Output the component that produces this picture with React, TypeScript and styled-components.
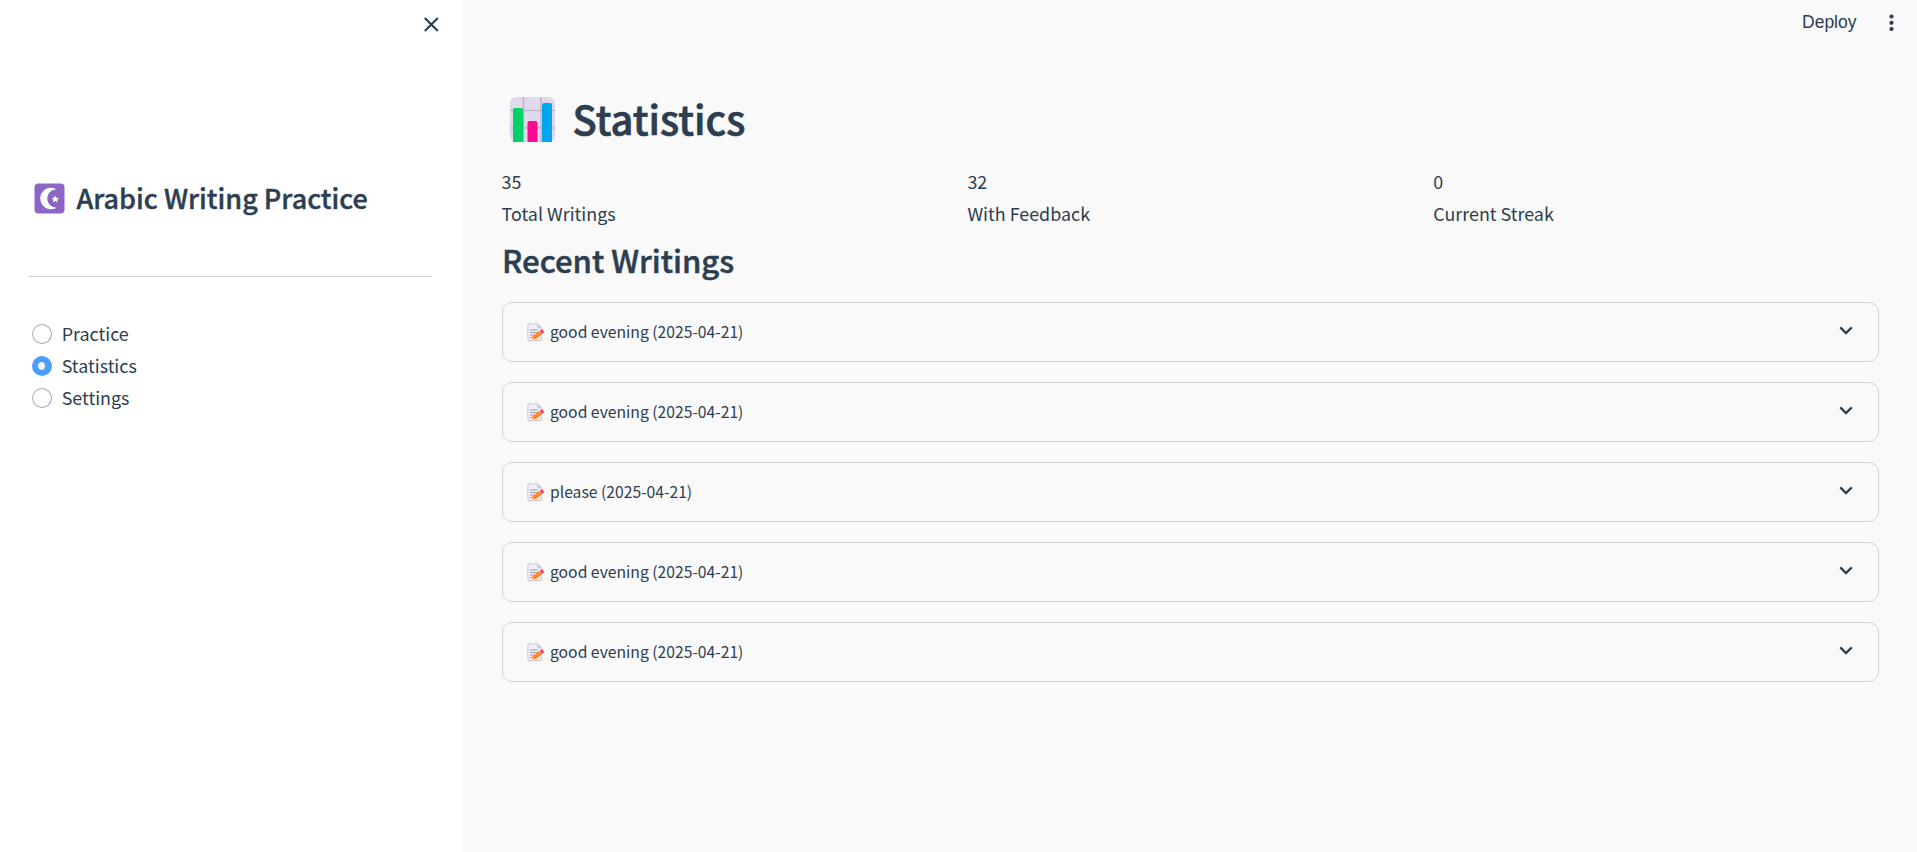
import React, { useState } from "react";
import styled, { createGlobalStyle } from "styled-components";

const ink = "#2c3e50";
const line = "#d0d2d6";

const GlobalStyle = createGlobalStyle`
  * { box-sizing: border-box; }
  body {
    margin: 0;
    background: #f9f9f9;
    color: ${ink};
    font-family: "Noto Sans CJK SC", "Noto Sans", sans-serif;
    font-size: 17.9px;
    line-height: 32px;
  }
  h1, h2, p { margin: 0; }
`;

const Page = styled.div`
  display: flex;
  height: 852px;
  overflow: hidden;
`;

const Sidebar = styled.aside`
  width: 462px;
  flex: none;
  background: #fff;
  padding: 14px 30px 0 29px;
  display: flex;
  flex-direction: column;
`;

const CloseButton = styled.button`
  align-self: flex-end;
  border: 0;
  padding: 0;
  margin-right: -9px;
  width: 20px;
  height: 20px;
  background: none;
  color: ${ink};
  svg { display: block; }
`;

const Brand = styled.h1`
  display: flex;
  align-items: center;
  gap: 11.5px;
  margin-top: 146px;
  padding-left: 5px;
  font-size: 27px;
  line-height: 36px;
  font-weight: 500;
  -webkit-text-stroke: 0.4px ${ink};
  white-space: nowrap;
`;

const Divider = styled.hr`
  width: 403px;
  margin: 60px 0 40px;
  border: 0;
  border-top: 1px solid ${line};
`;

const Option = styled.label`
  display: flex;
  align-items: center;
  gap: 9.7px;
  height: 32px;
  padding-left: 3px;
  cursor: pointer;
  input { display: none; }
`;

const Dot = styled.span<{ $on: boolean }>`
  display: flex;
  align-items: center;
  justify-content: center;
  width: 20px;
  height: 20px;
  margin-top: 2px;
  border-radius: 50%;
  background: ${(p) => (p.$on ? "#4a9eff" : "linear-gradient(to left, #9a9fac, #acb0ba)")};
  &::after {
    content: "";
    width: ${(p) => (p.$on ? "7px" : "18px")};
    height: ${(p) => (p.$on ? "8px" : "18px")};
    margin-right: 1px;
    border-radius: 50%;
    background: ${(p) => (p.$on ? "#f0f2f6" : "#fff")};
  }
`;

const Main = styled.main`
  flex: 1;
  padding: 0 38px 0 40px;
  display: flex;
  flex-direction: column;
`;

const Toolbar = styled.header`
  display: flex;
  justify-content: flex-end;
  align-items: center;
  gap: 28px;
  height: 44px;
  margin-right: -19.5px;
  font-family: "Liberation Sans", Arial, sans-serif;
  font-size: 17.5px;
  svg { display: block; }
`;

const Title = styled.h1`
  display: flex;
  align-items: center;
  gap: 17.5px;
  margin-top: 44px;
  padding-left: 8px;
  font-size: 39.9px;
  line-height: 60px;
  font-weight: 500;
  -webkit-text-stroke: 0.7px ${ink};
  svg { margin-top: 3px; }
`;

const Metrics = styled.section`
  display: grid;
  grid-template-columns: repeat(3, 1fr);
  gap: 20px;
  margin: 17px 0 0 -0.4px;
`;

const Subtitle = styled.h2`
  margin-top: 7px;
  font-size: 31.1px;
  line-height: 48px;
  font-weight: 500;
  -webkit-text-stroke: 0.5px ${ink};
`;

const List = styled.section`
  display: flex;
  flex-direction: column;
  gap: 20px;
  margin-top: 18px;
`;

const Expander = styled.button`
  display: flex;
  align-items: center;
  width: 100%;
  height: 60px;
  padding: 0 25.5px 0 24px;
  border: 1px solid ${line};
  border-radius: 10px;
  background: none;
  color: inherit;
  font: inherit;
  font-size: 15.7px;
  text-align: left;
`;

const ExpanderLabel = styled.span`
  flex: 1;
  padding-left: 5px;
`;

const ChevronIcon = styled.svg`
  margin-bottom: 2px;
`;

const MoonIcon = () => (
  <svg width="31" height="31" viewBox="0 0 31 31">
    <rect x="0.5" y="0.5" width="30" height="30" rx="4" fill="#8d65c5" />
    <path d="M22.5 6.2A10.8 10.8 0 1 0 22.5 24.8A9.3 9.3 0 1 1 22.5 6.2Z" fill="#fff" />
    <path d="M21.3 12.4l1.1 2.3 2.6.3-1.9 1.7.5 2.5-2.3-1.2-2.3 1.2.5-2.5-1.9-1.7 2.6-.3z" fill="#fff" />
  </svg>
);

const ChartIcon = () => (
  <svg width="45" height="45" viewBox="0 0 45 45">
    <rect width="45" height="45" rx="6" fill="#e1d8ec" />
    <path d="M13.5 0v45M31 0v45M0 13.5h45M0 31h45" stroke="#b4acbc" strokeWidth="1.2" />
    <path d="M3 45V13q0-2 2-2h6q2 0 2 2v32z" fill="#00d26a" />
    <path d="M17.5 45V26q0-2 2-2h6q2 0 2 2v19z" fill="#fb0b91" />
    <path d="M32 45V8q0-2 2-2h6q2 0 2 2v37z" fill="#00a6ed" />
  </svg>
);

const MemoIcon = () => (
  <svg width="18" height="19" viewBox="0 0 18 19">
    <path d="M2 .9h8.7l4 4.2V16q0 1.6-1.6 1.6H2Q.9 17.6.9 16V2Q.9.9 2 .9z" fill="#f3eef8" stroke="#cdc4d6" strokeWidth="1" />
    <path d="M10.3.8v3.4q0 1.2 1.2 1.2H15z" fill="#cdc4d6" />
    <path d="M3 7h8M3 9.5h8M3 12h6M3 14.5h3" stroke="#998ea4" strokeWidth="0.9" />
    <path d="M4.2 16.8l1.2-3.5 2.4 3z" fill="#ffce7c" />
    <path d="M5.2 13.4l7-5.2 2.6 3.4-7 5.2z" fill="#ff822d" />
    <path d="M12.7 7.8l1.2-.9q1.2-.7 2 .3l.7 1q.6 1.1-.4 1.9l-1.2.9z" fill="#f92f60" />
  </svg>
);

const Chevron = () => (
  <ChevronIcon width="14" height="10" viewBox="0 0 14 10" fill="none" stroke={ink} strokeWidth="2.2">
    <path d="M1.3 1.4L7 7.1l5.7-5.7" />
  </ChevronIcon>
);

const metrics = [
  { value: 35, label: "Total Writings" },
  { value: 32, label: "With Feedback" },
  { value: 0, label: "Current Streak" },
];

const writings = ["good evening", "good evening", "please", "good evening", "good evening"];

export default function App() {
  const [page, setPage] = useState("Statistics");
  return (
    <Page>
      <GlobalStyle />
      <Sidebar>
        <CloseButton aria-label="Close sidebar">
          <svg width="20" height="20" viewBox="0 0 20 20" stroke={ink} strokeWidth="2.1">
            <path d="M3.8 4l13 13M16.8 4l-13 13" />
          </svg>
        </CloseButton>
        <Brand><MoonIcon />Arabic Writing Practice</Brand>
        <Divider />
        {["Practice", "Statistics", "Settings"].map((name) => (
          <Option key={name}>
            <input type="radio" name="page" checked={page === name} onChange={() => setPage(name)} />
            <Dot $on={page === name} />
            {name}
          </Option>
        ))}
      </Sidebar>
      <Main>
        <Toolbar>
          Deploy
          <svg width="14" height="20" viewBox="0 0 14 20" fill={ink}>
            <circle cx="6.5" cy="4.5" r="2.1" /><circle cx="6.5" cy="10.8" r="2.1" /><circle cx="6.5" cy="17" r="2.1" />
          </svg>
        </Toolbar>
        <Title><ChartIcon />Statistics</Title>
        <Metrics>
          {metrics.map((m) => (
            <div key={m.label}>
              <p>{m.value}</p>
              <p>{m.label}</p>
            </div>
          ))}
        </Metrics>
        <Subtitle>Recent Writings</Subtitle>
        <List>
          {writings.map((w, i) => (
            <Expander key={i}>
              <MemoIcon />
              <ExpanderLabel>{w} (2025-04-21)</ExpanderLabel>
              <Chevron />
            </Expander>
          ))}
        </List>
      </Main>
    </Page>
  );
}
